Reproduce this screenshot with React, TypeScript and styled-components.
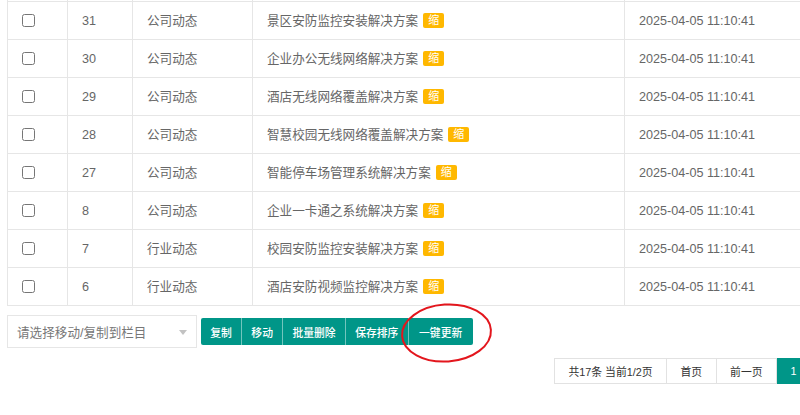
import React from "react";
import styled, { createGlobalStyle } from "styled-components";

const GlobalStyle = createGlobalStyle`
  html, body {
    margin: 0;
    padding: 0;
    background: #fff;
    overflow: hidden;
  }
  body {
    font-family: "Liberation Sans", "Noto Sans CJK SC", sans-serif;
    color: #666;
  }
`;

const Page = styled.div`
  width: 962px;
  padding: 0 7px;
  box-sizing: border-box;
  display: flex;
  flex-direction: column;
`;

const Table = styled.table`
  width: 941px;
  table-layout: fixed;
  border-collapse: collapse;
  border: none;
  font-size: 12.6px;
  color: #666;
`;

const Cell = styled.td`
  border: 1px solid #e6e6e6;
  height: 37px;
  padding: 0 14px;
  white-space: nowrap;
  vertical-align: middle;
  line-height: 20px;
`;

const StubCell = styled.td`
  border-left: 1px solid #e6e6e6;
  border-right: 1px solid #e6e6e6;
  border-bottom: 1px solid #e6e6e6;
  border-top: none;
  height: 1px;
  padding: 0;
  line-height: 0;
  font-size: 0;
`;

const Check = styled.input`
  margin: 0;
  width: 13px;
  height: 13px;
  vertical-align: middle;
  position: relative;
  top: -1px;
`;

const Badge = styled.span`
  display: inline-block;
  margin-left: 5px;
  padding: 0 5px;
  height: 15px;
  line-height: 15px;
  background: #ffb800;
  color: #fff;
  font-size: 11px;
  border-radius: 2px;
  vertical-align: middle;
  position: relative;
  top: -1px;
`;

const Toolbar = styled.div`
  display: flex;
  align-items: center;
  gap: 4px;
  margin-top: 9px;
`;

const Select = styled.div`
  width: 190px;
  height: 33px;
  box-sizing: border-box;
  border: 1px solid #e6e6e6;
  background: #fff;
  display: flex;
  align-items: center;
  justify-content: space-between;
  padding: 0 9px 0 9px;
  font-size: 12.6px;
  color: #777;
`;

const Caret = styled.span`
  width: 0;
  height: 0;
  border-left: 4.5px solid transparent;
  border-right: 4.5px solid transparent;
  border-top: 5px solid #c2c2c2;
  margin-top: 1px;
`;

const ButtonGroup = styled.div`
  display: flex;
  height: 27px;
`;

const Btn = styled.button<{ $pad?: number; $first?: boolean }>`
  position: relative;
  height: 27px;
  margin: 0;
  padding: 0 ${(p) => p.$pad ?? 9.25}px;
  border: none;
  border-left: ${(p) => (p.$first ? "none" : "1px solid rgba(255,255,255,0.45)")};
  background: #009688;
  color: #fff;
  font-family: "Liberation Sans", "Noto Sans CJK SC", sans-serif;
  font-size: 10.8px;
  font-weight: 500;
  white-space: nowrap;
  cursor: pointer;
  border-radius: ${(p) => (p.$first ? "2px 0 0 2px" : "0")};
  &:last-child {
    border-radius: 0 2px 2px 0;
  }
`;

const Mark = styled.svg`
  position: absolute;
  left: -9px;
  top: -16px;
  width: 95px;
  height: 62px;
  overflow: visible;
  pointer-events: none;
`;

const PagerRow = styled.div`
  display: flex;
  justify-content: flex-end;
  margin-top: 10px;
`;

const Pager = styled.div`
  display: flex;
  height: 26px;
  border: 1px solid #e2e2e2;
  border-right: none;
  box-sizing: border-box;
  font-size: 10.8px;
`;

const PageItem = styled.span<{ $active?: boolean }>`
  display: flex;
  align-items: center;
  padding: 0 13.5px;
  border-right: 1px solid #e2e2e2;
  background: ${(p) => (p.$active ? "#009688" : "#fff")};
  color: ${(p) => (p.$active ? "#fff" : "#333")};
  white-space: nowrap;
  margin-top: ${(p) => (p.$active ? "-1px" : "0")};
  margin-bottom: ${(p) => (p.$active ? "-1px" : "0")};
`;

const rows = [
  { id: 31, cat: "公司动态", title: "景区安防监控安装解决方案" },
  { id: 30, cat: "公司动态", title: "企业办公无线网络解决方案" },
  { id: 29, cat: "公司动态", title: "酒店无线网络覆盖解决方案" },
  { id: 28, cat: "公司动态", title: "智慧校园无线网络覆盖解决方案" },
  { id: 27, cat: "公司动态", title: "智能停车场管理系统解决方案" },
  { id: 8, cat: "公司动态", title: "企业一卡通之系统解决方案" },
  { id: 7, cat: "行业动态", title: "校园安防监控安装解决方案" },
  { id: 6, cat: "行业动态", title: "酒店安防视频监控解决方案" },
];

export default function App() {
  return (
    <>
      <GlobalStyle />
      <Page>
        <Table>
          <colgroup>
            <col style={{ width: 60 }} />
            <col style={{ width: 65 }} />
            <col style={{ width: 120 }} />
            <col style={{ width: 372 }} />
            <col style={{ width: 200 }} />
            <col />
          </colgroup>
          <tbody>
            <tr>
              <StubCell />
              <StubCell />
              <StubCell />
              <StubCell />
              <StubCell />
              <StubCell />
            </tr>
            {rows.map((r) => (
              <tr key={r.id}>
                <Cell>
                  <Check type="checkbox" />
                </Cell>
                <Cell>{r.id}</Cell>
                <Cell>{r.cat}</Cell>
                <Cell>
                  {r.title}
                  <Badge>缩</Badge>
                </Cell>
                <Cell>2025-04-05 11:10:41</Cell>
                <Cell />
              </tr>
            ))}
          </tbody>
        </Table>

        <Toolbar>
          <Select>
            <span>请选择移动/复制到栏目</span>
            <Caret />
          </Select>
          <ButtonGroup>
            <Btn $first>复制</Btn>
            <Btn>移动</Btn>
            <Btn>批量删除</Btn>
            <Btn>保存排序</Btn>
            <Btn $pad={10.5}>
              一键更新
              <Mark viewBox="0 0 95 62">
                <ellipse
                  cx="46.5"
                  cy="31"
                  rx="44.5"
                  ry="28.5"
                  fill="none"
                  stroke="#e3161d"
                  strokeWidth="2"
                  transform="rotate(-4 46.5 31)"
                />
              </Mark>
            </Btn>
          </ButtonGroup>
        </Toolbar>

        <PagerRow>
          <Pager>
            <PageItem>共17条 当前1/2页</PageItem>
            <PageItem>首页</PageItem>
            <PageItem>前一页</PageItem>
            <PageItem $active>1</PageItem>
            <PageItem>2</PageItem>
            <PageItem>后一页</PageItem>
            <PageItem>尾页</PageItem>
          </Pager>
        </PagerRow>
      </Page>
    </>
  );
}
